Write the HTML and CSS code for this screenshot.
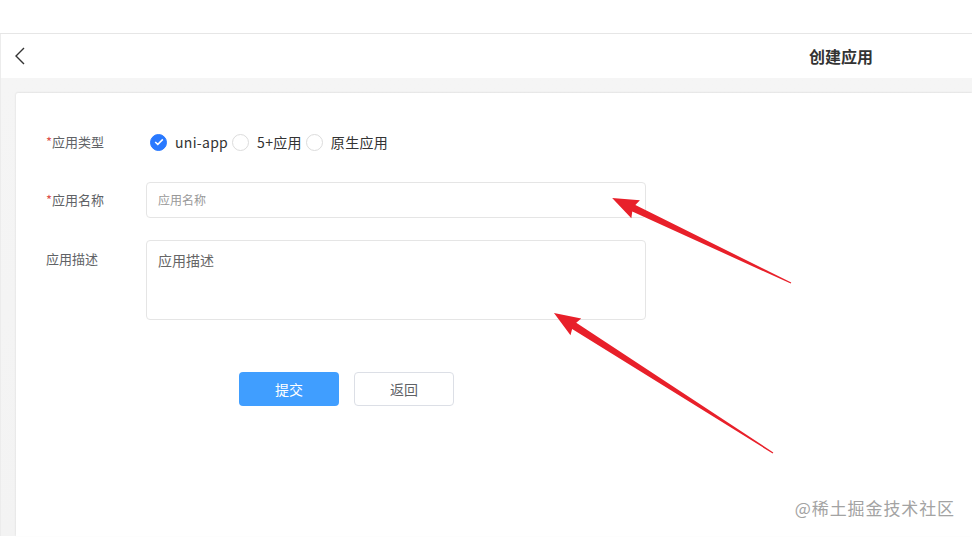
FILE: index.html
```html
<!DOCTYPE html>
<html lang="zh">
<head>
<meta charset="utf-8">
<title>创建应用</title>
<link rel="stylesheet" href="styles.css">
</head>
<body>
<div class="page">
  <div class="topgap"></div>
  <div class="app">
    <header class="navbar">
      <span class="back">
        <svg width="14" height="20" viewBox="0 0 14 20"><path d="M11 2 L3 10 L11 18" fill="none" stroke="#333" stroke-width="1.4"/></svg>
      </span>
      <span class="title">创建应用</span>
    </header>
    <main class="content">
      <section class="card">
        <form class="form">
          <div class="row row-radio">
            <label class="label"><span class="req">*</span>应用类型</label>
            <div class="radios">
              <span class="radio checked">
                <span class="dot"><svg width="10" height="8" viewBox="0 0 10 8"><path d="M1.2 4 L3.8 6.4 L8.8 1.4" fill="none" stroke="#fff" stroke-width="1.5"/></svg></span>
                <span class="rtext">uni-app</span>
              </span>
              <span class="radio">
                <span class="dot"></span>
                <span class="rtext">5+应用</span>
              </span>
              <span class="radio">
                <span class="dot"></span>
                <span class="rtext">原生应用</span>
              </span>
            </div>
          </div>
          <div class="row row-input">
            <label class="label"><span class="req">*</span>应用名称</label>
            <div class="input"><span class="placeholder">应用名称</span></div>
          </div>
          <div class="row row-textarea">
            <label class="label">应用描述</label>
            <div class="textarea"><span class="tplaceholder">应用描述</span></div>
          </div>
          <div class="buttons">
            <span class="btn btn-primary">提交</span>
            <span class="btn btn-default">返回</span>
          </div>
        </form>
      </section>
    </main>
  </div>
  <svg class="arrows" width="972" height="537" viewBox="0 0 972 537">
    <g transform="translate(791 283) rotate(205.4)">
      <polygon points="0,-0.6 174,-3.6 172,-10 198,0 172,10 174,3.6 0,0.6" fill="#e8202a"/>
    </g>
    <g transform="translate(773 453) rotate(212.6)">
      <polygon points="0,-0.6 236,-3.8 234,-10 260,0 234,10 236,3.8 0,0.6" fill="#e8202a"/>
    </g>
  </svg>
  <div class="watermark">@稀土掘金技术社区</div>
</div>
</body>
</html>
```

FILE: styles.css
```css
* { box-sizing: border-box; }
html, body {
  margin: 0;
  padding: 0;
  width: 972px;
  height: 537px;
  overflow: hidden;
  background: #fff;
  font-family: "Noto Sans", "Noto Sans CJK SC", sans-serif;
}
.page {
  position: relative;
  width: 972px;
  height: 537px;
  overflow: hidden;
}
.topgap {
  height: 34px;
  border-bottom: 1px solid #e6e6e6;
}
.app {
  display: flex;
  flex-direction: column;
  height: 502px;
  border-left: 1px solid #ececec;
}
.navbar {
  height: 44px;
  display: flex;
  align-items: center;
  background: #fff;
  flex-shrink: 0;
}
.back {
  display: flex;
  align-items: center;
  padding-left: 12px;
}
.title {
  margin-left: auto;
  margin-right: 99px;
  font-size: 16px;
  font-weight: bold;
  color: #333;
  font-family: "Noto Sans CJK SC", sans-serif;
}
.content {
  flex: 1;
  background: linear-gradient(#f5f5f5, #f3f3f3);
  padding: 15px 0 0 15px;
}
.card {
  background: #fff;
  height: 100%;
  border-top-left-radius: 2px;
  box-shadow: 0 -1px 2px rgba(0,0,0,0.06), -1px 0 2px rgba(0,0,0,0.04);
  padding: 31px 0 0 30px;
}
.form {
  display: flex;
  flex-direction: column;
}
.row {
  display: grid;
  grid-template-columns: 100px 500px;
}
.label {
  font-size: 13px;
  color: #606266;
  font-family: "Noto Sans CJK SC", sans-serif;
  line-height: 36px;
}
.req { color: #dd524d; }
.row-radio { height: 36px; }
.radios {
  display: flex;
  align-items: center;
  padding-left: 4px;
}
.radio {
  display: flex;
  align-items: center;
  margin-right: 4px;
}
.dot {
  width: 17px;
  height: 17px;
  border-radius: 50%;
  border: 1px solid #dcdcdc;
  background: #fff;
  display: flex;
  align-items: center;
  justify-content: center;
}
.radio.checked .dot {
  background: #2979ff;
  border-color: #2979ff;
}
.rtext {
  font-size: 14px;
  color: #333;
  margin-left: 8px;
  font-family: "Noto Sans CJK SC", sans-serif;
  letter-spacing: 0.3px;
}
.row-input { margin-top: 22px; }
.input {
  height: 36px;
  border: 1px solid #e5e5e5;
  border-radius: 4px;
  display: flex;
  align-items: center;
  padding-left: 11px;
  padding-bottom: 1px;
}
.placeholder {
  font-size: 12px;
  color: #999;
  font-family: "Noto Sans CJK SC", sans-serif;
}
.row-textarea { margin-top: 22px; }
.row-textarea .label { line-height: 38px; }
.textarea {
  height: 80px;
  border: 1px solid #e5e5e5;
  border-radius: 4px;
  padding: 8px 0 0 11px;
}
.tplaceholder {
  font-size: 14px;
  color: #666;
  font-family: "Noto Sans CJK SC", sans-serif;
  line-height: 20px;
}
.buttons {
  display: flex;
  gap: 15px;
  margin-top: 52px;
  padding-left: 193px;
}
.btn {
  width: 100px;
  height: 34px;
  border-radius: 4px;
  display: flex;
  align-items: center;
  justify-content: center;
  font-size: 14px;
  font-family: "Noto Sans CJK SC", sans-serif;
}
.btn-primary {
  background: #409eff;
  color: #fff;
}
.btn-default {
  background: #fff;
  border: 1px solid #dcdfe6;
  color: #606266;
}
.arrows {
  position: absolute;
  left: 0;
  top: 0;
  pointer-events: none;
}
.watermark {
  position: absolute;
  right: 17px;
  bottom: 17px;
  font-size: 17px;
  color: #a3a3a3;
  font-family: "Noto Sans CJK SC", sans-serif;
  letter-spacing: 0.9px;
}
```
